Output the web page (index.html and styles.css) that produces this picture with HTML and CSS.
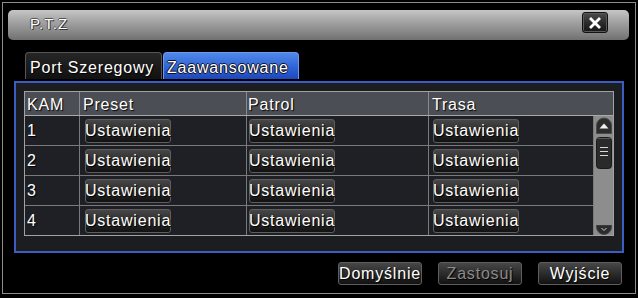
FILE: index.html
```html
<!DOCTYPE html>
<html>
<head>
<meta charset="utf-8">
<link rel="stylesheet" href="styles.css">
</head>
<body>
<div class="window">
  <div class="titlebar">
    <span class="title">P.T.Z</span>
    <div class="close">
      <svg width="12" height="12" viewBox="0 0 12 12"><path d="M2 2 L10 10 M10 2 L2 10" stroke="#fff" stroke-width="2.8" stroke-linecap="square"/></svg>
    </div>
  </div>
  <div class="tabs">
    <div class="tab">Port Szeregowy</div>
    <div class="tab active">Zaawansowane</div>
  </div>
  <div class="panel">
    <div class="grid">
      <div class="thead">
        <div class="th th-kam">KAM</div>
        <div class="th">Preset</div>
        <div class="th th-patrol">Patrol</div>
        <div class="th">Trasa</div>
      </div>
      <div class="tbody">
        <div class="rows">
          <div class="row">
            <div class="cell num">1</div>
            <div class="cell c-preset"><div class="btn">Ustawienia</div></div>
            <div class="cell c-patrol"><div class="btn">Ustawienia</div></div>
            <div class="cell c-trasa"><div class="btn">Ustawienia</div></div>
          </div>
          <div class="row">
            <div class="cell num">2</div>
            <div class="cell c-preset"><div class="btn">Ustawienia</div></div>
            <div class="cell c-patrol"><div class="btn">Ustawienia</div></div>
            <div class="cell c-trasa"><div class="btn">Ustawienia</div></div>
          </div>
          <div class="row">
            <div class="cell num">3</div>
            <div class="cell c-preset"><div class="btn">Ustawienia</div></div>
            <div class="cell c-patrol"><div class="btn">Ustawienia</div></div>
            <div class="cell c-trasa"><div class="btn">Ustawienia</div></div>
          </div>
          <div class="row">
            <div class="cell num">4</div>
            <div class="cell c-preset"><div class="btn">Ustawienia</div></div>
            <div class="cell c-patrol"><div class="btn">Ustawienia</div></div>
            <div class="cell c-trasa"><div class="btn">Ustawienia</div></div>
          </div>
        </div>
        <div class="scrollbar">
          <svg class="sb-up" width="18" height="17" viewBox="0 0 18 17">
            <path d="M1.5 16.5 V8.5 A7.5 7.5 0 0 1 16.5 8.5 V16.5 Z" fill="#2c2c2c" stroke="#4a4a4a"/>
            <path d="M4.5 11.5 L9 6.5 L13.5 11.5 Z" fill="#eeeeee"/>
          </svg>
          <svg class="sb-thumb" width="18" height="32" viewBox="0 0 18 32">
            <rect x="1.5" y="0.5" width="15" height="31" rx="3" fill="#2a2a2a" stroke="#1a1a1a"/>
            <path d="M2.5 1.5 H15.5" stroke="#555" />
            <path d="M5 10.5 H13 M5 14.5 H13 M5 18.5 H13" stroke="#d8d8d8" stroke-width="1"/>
          </svg>
          <svg class="sb-down" width="18" height="10" viewBox="0 0 18 10">
            <path d="M1.5 0 H16.5 V2 A7.5 7.5 0 0 1 1.5 2 Z" fill="#2c2c2c" stroke="#4a4a4a"/>
            <path d="M6.5 3 L9 5.5 L11.5 3" stroke="#cccccc" fill="none" stroke-width="1"/>
          </svg>
        </div>
      </div>
    </div>
  </div>
  <div class="footer">
    <div class="btn foot">Domyślnie</div>
    <div class="btn foot disabled">Zastosuj</div>
    <div class="btn foot">Wyjście</div>
  </div>
</div>
</body>
</html>
```

FILE: styles.css
```css
* { box-sizing: border-box; }
html, body { margin: 0; padding: 0; background: #000; }
body {
  width: 638px;
  height: 298px;
  overflow: hidden;
  font-family: "Liberation Sans", Arial, sans-serif;
  font-size: 16px;
  letter-spacing: 0.8px;
  color: #fff;
}
.window {
  margin: 2px 0 0 2px;
  width: 634px;
  height: 292px;
  border: 1px solid #8c8c8c;
  background: #000;
  display: flex;
  flex-direction: column;
}
.titlebar {
  margin: 7px 6px 0 5px;
  height: 30px;
  border-radius: 5px;
  background: linear-gradient(#c6c6c6, #a6a6a6 35%, #8a8a8a 70%, #707070);
  display: flex;
  align-items: flex-start;
  padding-left: 22px;
}
.title {
  font-size: 15px;
  letter-spacing: 1px;
  line-height: 18px;
  margin-top: 5px;
  color: #fff;
  text-shadow: 1px 1px 0 #333, -1px 0 0 #555, 0 -1px 0 #555;
}
.close {
  margin: 2px 21px 0 auto;
  width: 26px;
  height: 21px;
  border: 1px solid #111;
  border-radius: 3px;
  background: linear-gradient(#4c4c4c, #2a2a2a 55%, #161616);
  box-shadow: inset 0 0 0 1px #5a5a5a;
  display: flex;
  align-items: center;
  justify-content: center;
}
.close svg { display: block; }
.tabs {
  display: flex;
  gap: 1px;
  margin: 12px 0 0 22px;
  height: 27px;
}
.tab {
  width: 137px;
  height: 27px;
  border: 1px solid #555;
  border-bottom: none;
  border-radius: 4px 4px 0 0;
  background: linear-gradient(#262626, #111);
  padding: 2px 0 0 4px;
  line-height: 26px;
  white-space: nowrap;
  text-shadow: 1px 1px 1px #000;
}
.tab.active {
  width: 136px;
  padding-left: 3px;
  border-color: #6e98e8;
  background: linear-gradient(#4f88ea, #2f64d6 55%, #1d48bc);
  text-shadow: 1px 0 0 #112, -1px 0 0 #112, 0 1px 0 #112, 0 -1px 0 #112;
}
.panel {
  margin: 2px 0 0 11px;
  width: 610px;
  height: 172px;
  border: 2px solid #3b5cc0;
  background: #1c1d21;
  padding: 8px;
}
.grid {
  width: 590px;
  border: 1px solid #a2a2a2;
  background: #1f2025;
}
.thead {
  display: grid;
  grid-template-columns: 54px 167px 182px 1fr;
  height: 24px;
  background: #4b4f55;
  border-bottom: 1px solid #a8a8a8;
}
.th {
  padding: 2px 0 0 3px;
  line-height: 21px;
  border-left: 1px solid #8a8a8a;
  text-shadow: 1px 1px 1px #000;
}
.th-kam { border-left: none; padding-left: 2px; }
.th-patrol { padding-left: 1px; }
.tbody {
  display: flex;
  height: 119px;
}
.rows { flex: 1; }
.row {
  display: grid;
  grid-template-columns: 54px 167px 182px 1fr;
  height: 30px;
  border-bottom: 1px solid #7a7a7a;
}
.row:last-child { height: 29px; border-bottom: none; }
.cell {
  display: flex;
  align-items: center;
  border-left: 1px solid #7a7a7a;
}
.cell.num { border-left: none; padding-left: 2px; text-shadow: 1px 1px 1px #000; }
.c-preset { padding-left: 5px; }
.c-patrol { padding-left: 2px; }
.c-trasa { padding-left: 4px; }
.btn {
  width: 86px;
  height: 24px;
  border: 1px solid #5e5e5e;
  border-radius: 3px;
  background: linear-gradient(#474747, #2c2c2c 50%, #121212);
  display: flex;
  align-items: center;
  justify-content: center;
  white-space: nowrap;
  line-height: 20px;
  color: #fff;
  text-shadow: 1px 1px 1px #000;
}
.scrollbar {
  width: 20px;
  border-left: 1px solid #7a7a7a;
  background: #8d8d8d;
  display: flex;
  flex-direction: column;
  align-items: center;
}
.scrollbar svg { display: block; }
.sb-up { margin-top: 1px; }
.sb-thumb { margin-top: 3px; }
.sb-down { margin-top: auto; }
.footer {
  display: flex;
  justify-content: flex-end;
  gap: 16px;
  margin: 9px 13px 0 0;
}
.btn.foot {
  width: 84px;
  height: 23px;
}
.btn.disabled { color: #8a8a8a; }
```
